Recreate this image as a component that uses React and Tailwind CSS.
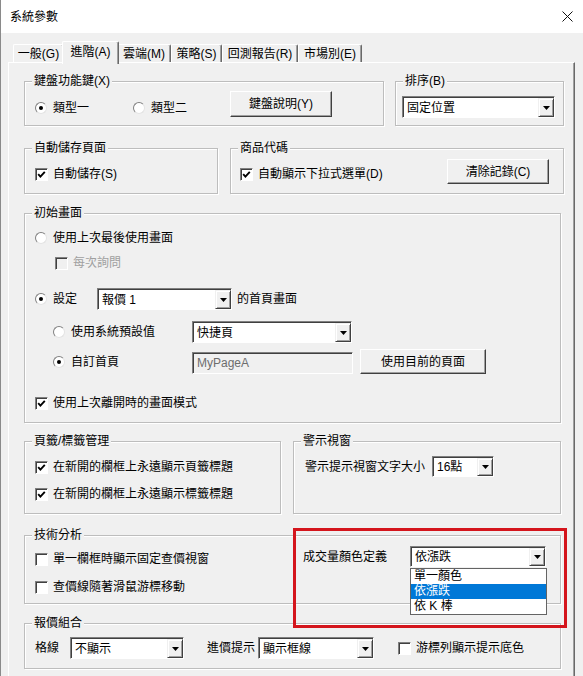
import React from 'react';

const groupBox =
  "border border-[#bdbdbd] shadow-[inset_1px_1px_0_#ffffff,1px_1px_0_#ffffff] p-0 m-0";
const legendCls = "ml-[7px] px-[2px] leading-[14px] bg-[#f0f0f0]";

function CheckMark() {
  return (
    <svg width="9" height="9" viewBox="0 0 9 9">
      <polyline points="1.2,4.2 3.4,6.6 7.8,1.8" fill="none" stroke="#000" strokeWidth="1.9" />
    </svg>
  );
}

function Check({ checked, disabled, label, className = "" }) {
  return (
    <div className={"flex items-center h-4 " + className}>
      <span
        className={
          "w-[13px] h-[13px] flex items-center justify-center border border-t-[#808080] border-l-[#808080] border-r-white border-b-white shadow-[inset_1px_1px_0_#404040] " +
          (disabled ? "bg-[#f0f0f0]" : "bg-white")
        }
      >
        {checked && <CheckMark />}
      </span>
      <span className={"ml-[5px] whitespace-nowrap " + (disabled ? "text-[#a0a0a0]" : "")}>{label}</span>
    </div>
  );
}

function Radio({ checked, label, className = "" }) {
  return (
    <div className={"flex items-center h-4 " + className}>
      <span className="w-[12px] h-[12px] rounded-full bg-white border border-t-[#808080] border-l-[#808080] border-r-[#e3e3e3] border-b-[#e3e3e3] flex items-center justify-center">
        {checked && <span className="w-[4px] h-[4px] rounded-full bg-black" />}
      </span>
      <span className="ml-[6px] whitespace-nowrap">{label}</span>
    </div>
  );
}

function Btn({ children, className = "" }) {
  return (
    <button
      className={
        "flex items-center justify-center bg-[#f0f0f0] border border-t-white border-l-white border-r-[#404040] border-b-[#404040] shadow-[inset_-1px_-1px_0_#a0a0a0] " +
        className
      }
    >
      {children}
    </button>
  );
}

function Arrow() {
  return (
    <svg width="7" height="4" viewBox="0 0 7 4">
      <polygon points="0,0 7,0 3.5,4" fill="#000" />
    </svg>
  );
}

function Combo({ value, className = "", children }) {
  return (
    <div
      className={
        "relative flex bg-white border border-t-[#808080] border-l-[#808080] border-r-white border-b-white shadow-[inset_1px_1px_0_#404040] p-[1px_0_0_1px] " +
        className
      }
    >
      <span className="flex-1 flex items-center pl-[3px] whitespace-nowrap">{value}</span>
      <span className="w-[16px] flex items-center justify-center bg-[#f0f0f0] border border-t-[#f0f0f0] border-l-[#f0f0f0] border-r-[#404040] border-b-[#404040] shadow-[inset_1px_1px_0_#ffffff,inset_-1px_-1px_0_#a0a0a0]">
        <Arrow />
      </span>
      {children}
    </div>
  );
}

function Tab({ label, selected, className = "" }) {
  return (
    <div
      className={
        "flex justify-center bg-[#f0f0f0] border-t border-l border-r border-t-white border-l-white border-r-[#696969] rounded-t-[2px] shadow-[inset_-1px_0_0_#a0a0a0] " +
        (selected ? "relative z-10 h-[23px] -mb-[2px] -mx-[2px] pt-[3px] " : "h-[18px] pt-[2px] ") +
        className
      }
    >
      <span className="whitespace-nowrap">{label}</span>
    </div>
  );
}

export default function App() {
  return (
    <div className="relative w-[583px] h-[676px] overflow-hidden bg-[#f0f0f0] border-l border-[#8a8a8a] text-black text-[12px] leading-[14px] font-['Liberation_Sans','Noto_Sans_CJK_TC',sans-serif]">
      {/* title bar */}
      <div className="h-[33px] bg-white flex items-center justify-between pl-[9px] pr-[10px]">
        <span>系統參數</span>
        <svg width="11" height="11" viewBox="0 0 11 11">
          <path d="M0.5 0.5 L10.5 10.5 M10.5 0.5 L0.5 10.5" stroke="#111" strokeWidth="1" />
        </svg>
      </div>

      {/* tabs */}
      <div className="h-[29px] flex items-end pl-[12px]">
        <Tab label="一般(G)" className="w-[51px]" />
        <Tab label="進階(A)" selected className="w-[57px]" />
        <Tab label="雲端(M)" className="w-[54px]" />
        <Tab label="策略(S)" className="w-[51px]" />
        <Tab label="回測報告(R)" className="w-[76px]" />
        <Tab label="市場別(E)" className="w-[64px]" />
      </div>

      {/* tab page */}
      <div className="ml-[7px] w-[567px] h-[620px] border-t border-l border-r border-t-white border-l-white border-r-[#696969] shadow-[inset_-1px_0_0_#a0a0a0] pl-[15px]">
        {/* row 1 */}
        <div className="flex mt-[11px]">
          <fieldset className={groupBox + " w-[360px] h-[52px]"}>
            <legend className={legendCls}>鍵盤功能鍵(X)</legend>
            <div className="flex items-start pl-[10px]">
              <Radio checked label="類型一" className="w-[98px] mt-[12px]" />
              <Radio label="類型二" className="w-[97px] mt-[12px]" />
              <Btn className="w-[102px] h-[26px] mt-[3px]">鍵盤說明(Y)</Btn>
            </div>
          </fieldset>
          <fieldset className={groupBox + " ml-[11px] w-[169px] h-[52px]"}>
            <legend className={legendCls}>排序(B)</legend>
            <Combo value="固定位置" className="ml-[6px] mt-[8px] w-[153px] h-[22px]" />
          </fieldset>
        </div>

        {/* row 2 */}
        <div className="flex mt-[15px]">
          <fieldset className={groupBox + " w-[194px] h-[53px]"}>
            <legend className={legendCls}>自動儲存頁面</legend>
            <Check checked label="自動儲存(S)" className="ml-[10px] mt-[11px]" />
          </fieldset>
          <fieldset className={groupBox + " ml-[12px] w-[334px] h-[53px]"}>
            <legend className={legendCls}>商品代碼</legend>
            <div className="flex items-start">
              <Check checked label="自動顯示下拉式選單(D)" className="ml-[9px] mt-[11px]" />
              <Btn className="ml-auto mr-[14px] mt-[4px] w-[102px] h-[25px]">清除記錄(C)</Btn>
            </div>
          </fieldset>
        </div>

        {/* row 3 */}
        <fieldset className={groupBox + " mt-[12px] w-[537px] h-[217px]"}>
          <legend className={legendCls}>初始畫面</legend>
          <Radio label="使用上次最後使用畫面" className="ml-[10px] mt-[10px]" />
          <Check disabled label="每次詢問" className="ml-[30px] mt-[9px]" />
          <div className="flex items-center h-[22px] ml-[10px] mt-[17px]">
            <Radio checked label="設定" className="w-[62px]" />
            <Combo value="報價 1" className="w-[135px] h-[22px]" />
            <span className="ml-[5px]">的首頁畫面</span>
          </div>
          <div className="flex items-center h-[22px] ml-[28px] mt-[11px]">
            <Radio label="使用系統預設值" className="w-[139px]" />
            <Combo value="快捷頁" className="w-[160px] h-[22px]" />
          </div>
          <div className="flex items-start ml-[28px] mt-[6px]">
            <Radio checked label="自訂首頁" className="w-[139px] mt-[5px]" />
            <div className="mt-[3px] w-[161px] h-[22px] flex items-center pl-[4px] bg-[#f0f0f0] text-[#6d6d6d] border border-t-[#808080] border-l-[#808080] border-r-white border-b-white shadow-[inset_1px_1px_0_#404040]">
              MyPageA
            </div>
            <Btn className="ml-[7px] w-[126px] h-[25px]">使用目前的頁面</Btn>
          </div>
          <Check checked label="使用上次離開時的畫面模式" className="ml-[10px] mt-[21px]" />
        </fieldset>

        {/* row 4 */}
        <div className="flex mt-[11px]">
          <fieldset className={groupBox + " w-[257px] h-[80px]"}>
            <legend className={legendCls}>頁籤/標籤管理</legend>
            <Check checked label="在新開的欄框上永遠顯示頁籤標題" className="ml-[10px] mt-[11px]" />
            <Check checked label="在新開的欄框上永遠顯示標籤標題" className="ml-[10px] mt-[11px]" />
          </fieldset>
          <fieldset className={groupBox + " ml-[12px] w-[268px] h-[80px]"}>
            <legend className={legendCls}>警示視窗</legend>
            <div className="flex items-center ml-[11px] mt-[8px]">
              <span>警示提示視窗文字大小</span>
              <Combo value="16點" className="ml-[7px] w-[62px] h-[21px]" />
            </div>
          </fieldset>
        </div>

        {/* row 5 */}
        <fieldset className={groupBox + " mt-[14px] w-[537px] h-[76px]"}>
          <legend className={legendCls}>技術分析</legend>
          <div className="flex">
            <div className="w-[278px] pl-[10px]">
              <Check label="單一欄框時顯示固定查價視窗" className="mt-[9px]" />
              <Check label="查價線隨著滑鼠游標移動" className="mt-[12px]" />
            </div>
            <div className="flex items-center h-[21px] mt-[4px]">
              <span className="w-[107px]">成交量顏色定義</span>
              <Combo value="依漲跌" className="w-[136px] h-[21px]">
                <div className="absolute left-[-1px] top-[21px] z-20 w-[137px] bg-white border border-[#646464]">
                  <div className="h-[15px] pl-[3px] leading-[15px]">單一顏色</div>
                  <div className="h-[15px] pl-[3px] leading-[15px] bg-[#0078d7] text-white">依漲跌</div>
                  <div className="h-[15px] pl-[3px] leading-[15px]">依 K 棒</div>
                </div>
              </Combo>
            </div>
          </div>
        </fieldset>

        {/* row 6 */}
        <fieldset className={groupBox + " mt-[12px] w-[537px] h-[53px]"}>
          <legend className={legendCls}>報價組合</legend>
          <div className="flex items-center h-[22px] ml-[10px] mt-[7px]">
            <span>格線</span>
            <Combo value="不顯示" className="ml-[11px] w-[114px] h-[22px]" />
            <span className="ml-[23px]">進價提示</span>
            <Combo value="顯示框線" className="ml-[3px] w-[116px] h-[22px]" />
            <Check label="游標列顯示提示底色" className="ml-[24px]" />
          </div>
        </fieldset>
      </div>

      {/* highlight annotation */}
      <div className="absolute left-[292px] top-[528px] w-[274px] h-[100px] border-[3px] border-[#d4151c] z-30 pointer-events-none" />
    </div>
  );
}
